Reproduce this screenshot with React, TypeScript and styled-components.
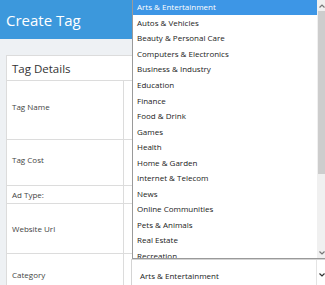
import React from 'react';
import styled, { createGlobalStyle } from 'styled-components';

const GlobalStyle = createGlobalStyle`
  html, body {
    margin: 0;
    padding: 0;
    background: #eef1f4;
    font-family: 'Open Sans', 'Noto Sans', sans-serif;
    overflow: hidden;
  }
`;

const Page = styled.div`
  width: 325px;
  height: 285px;
  overflow: hidden;
  position: relative;
`;

const Header = styled.div`
  height: 39px;
  background: #3c98dc;
  display: flex;
  align-items: center;
  padding-left: 6px;
`;

const Title = styled.h1`
  margin: 0;
  font-size: 15px;
  font-weight: 400;
  color: #fff;
`;

const Main = styled.div`
  padding: 16px 0 0 6px;
`;

const Card = styled.div`
  background: #fff;
  border: 1px solid #dcdcdc;
  border-right: none;
  width: 319px;
`;

const CardTitle = styled.div`
  height: 24px;
  display: flex;
  align-items: center;
  padding-left: 5px;
  font-size: 11.5px;
  color: #333;
  border-bottom: 1px solid #dcdcdc;
`;

const Row = styled.div<{ h: number }>`
  display: grid;
  grid-template-columns: 117px 1fr;
  height: ${(p) => p.h}px;
  border-bottom: 1px solid #dcdcdc;
`;

const Label = styled.div<{ shift?: number }>`
  display: flex;
  align-items: center;
  padding-left: 5px;
  padding-bottom: ${(p) => p.shift ?? 0}px;
  font-size: 8px;
  color: #444;
  border-right: 1px solid #dcdcdc;
`;

const FieldCell = styled.div`
  padding: 5px 0 0 7px;
`;

const SelectWrap = styled.div`
  position: relative;
  height: 30px;
  border: 1px solid #d4d4d4;
  border-right: none;
  background: #fff;
  display: flex;
  align-items: center;
`;

const SelectValue = styled.div`
  flex: 1;
  padding-left: 8px;
  font-size: 8px;
  color: #222;
`;

const SelectArrow = styled.div`
  width: 9px;
  align-self: stretch;
  display: flex;
  align-items: center;
  justify-content: center;
  border-left: 1px solid #e4e4e4;
`;

const Popup = styled.div`
  position: absolute;
  left: 0;
  right: 0;
  bottom: calc(100% + 1px);
  height: 259px;
  background: #fff;
  border-left: 1px solid #9a9a9a;
  border-bottom: 1px solid #9a9a9a;
  display: flex;
  overflow: hidden;
  box-sizing: border-box;
`;

const OptionList = styled.div`
  flex: 1;
  margin-top: -1px;
`;

const Option = styled.div<{ selected?: boolean }>`
  height: 15.56px;
  display: flex;
  align-items: center;
  padding-left: 4px;
  font-size: 8px;
  white-space: nowrap;
  color: ${(p) => (p.selected ? '#fff' : '#222')};
  background: ${(p) => (p.selected ? '#3d96e6' : 'transparent')};
`;

const Scrollbar = styled.div`
  width: 9px;
  background: #f0f0f0;
  display: flex;
  flex-direction: column;
`;

const ScrollButton = styled.div`
  height: 11px;
  display: flex;
  align-items: center;
  justify-content: center;
`;

const Thumb = styled.div`
  height: 163px;
  background: #cdcdcd;
  margin: 0 1px;
`;

const Track = styled.div`
  flex: 1;
`;

const Chevron = ({ up, color = '#555' }: { up?: boolean; color?: string }) => (
  <svg width="6" height="4" viewBox="0 0 6 4">
    <path
      d={up ? 'M0.5 3.5 L3 1 L5.5 3.5' : 'M0.5 0.5 L3 3 L5.5 0.5'}
      fill="none"
      stroke={color}
      strokeWidth="1.2"
    />
  </svg>
);

const categories = [
  'Arts & Entertainment',
  'Autos & Vehicles',
  'Beauty & Personal Care',
  'Computers & Electronics',
  'Business & Industry',
  'Education',
  'Finance',
  'Food & Drink',
  'Games',
  'Health',
  'Home & Garden',
  'Internet & Telecom',
  'News',
  'Online Communities',
  'Pets & Animals',
  'Real Estate',
  'Recreation',
];

const App: React.FC = () => {
  return (
    <Page>
      <GlobalStyle />
      <Header>
        <Title>Create Tag</Title>
      </Header>
      <Main>
        <Card>
          <CardTitle>Tag Details</CardTitle>
          <Row h={58}>
            <Label shift={8}>Tag Name</Label>
            <FieldCell />
          </Row>
          <Row h={45}>
            <Label shift={6}>Tag Cost</Label>
            <FieldCell />
          </Row>
          <Row h={17}>
            <Label>Ad Type:</Label>
            <FieldCell />
          </Row>
          <Row h={49}>
            <Label>Website Url</Label>
            <FieldCell />
          </Row>
          <Row h={44}>
            <Label shift={4}>Category</Label>
            <FieldCell>
              <SelectWrap>
                <SelectValue>Arts &amp; Entertainment</SelectValue>
                <SelectArrow>
                  <Chevron color="#333" />
                </SelectArrow>
                <Popup>
                  <OptionList>
                    {categories.map((c, i) => (
                      <Option key={c} selected={i === 0}>
                        {c}
                      </Option>
                    ))}
                  </OptionList>
                  <Scrollbar>
                    <ScrollButton>
                      <Chevron up color="#777" />
                    </ScrollButton>
                    <Thumb />
                    <Track />
                    <ScrollButton>
                      <Chevron color="#777" />
                    </ScrollButton>
                  </Scrollbar>
                </Popup>
              </SelectWrap>
            </FieldCell>
          </Row>
        </Card>
      </Main>
    </Page>
  );
};

export default App;
